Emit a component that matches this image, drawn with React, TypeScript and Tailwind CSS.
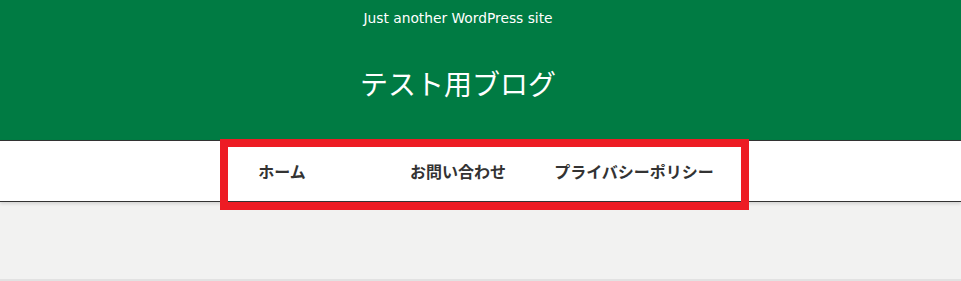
import React from 'react';

const navItems = ['ホーム', 'お問い合わせ', 'プライバシーポリシー'];

export default function App() {
  return (
    <div className="relative w-[961px] h-[281px] overflow-hidden bg-[#f2f2f1] font-['DejaVu_Sans','Noto_Sans_CJK_JP',sans-serif]">
      {/* Header */}
      <header className="h-[140px] bg-[#007b43] text-white">
        <div className="w-[916px] text-center">
          <p className="h-[36px] leading-[36px] text-[13.8px]">Just another WordPress site</p>
          <h1 className="mt-[27px] leading-[40px] text-[28px] font-['Noto_Sans_CJK_JP',sans-serif] font-normal">
            テスト用ブログ
          </h1>
        </div>
      </header>

      {/* Global navigation */}
      <nav className="relative z-10 bg-white border-y border-[#333] shadow-[0_2px_3px_rgba(0,0,0,0.12)]">
        <ul className="w-[916px] flex justify-center">
          {navItems.map((item) => (
            <li key={item} className="w-[176px] h-[60px] leading-[60px] text-center">
              <a className="text-[16px] font-bold text-[#333] font-['Noto_Sans_CJK_JP',sans-serif]">{item}</a>
            </li>
          ))}
        </ul>
      </nav>

      {/* Content area */}
      <div className="h-[77px]" />
      <div className="h-[2px] bg-[#e2e2e2]" />

      {/* Highlight annotation */}
      <div className="absolute z-20 left-[220px] top-[139px] w-[529px] h-[71px] border-[8px] border-[#ed1c24]" />
    </div>
  );
}
